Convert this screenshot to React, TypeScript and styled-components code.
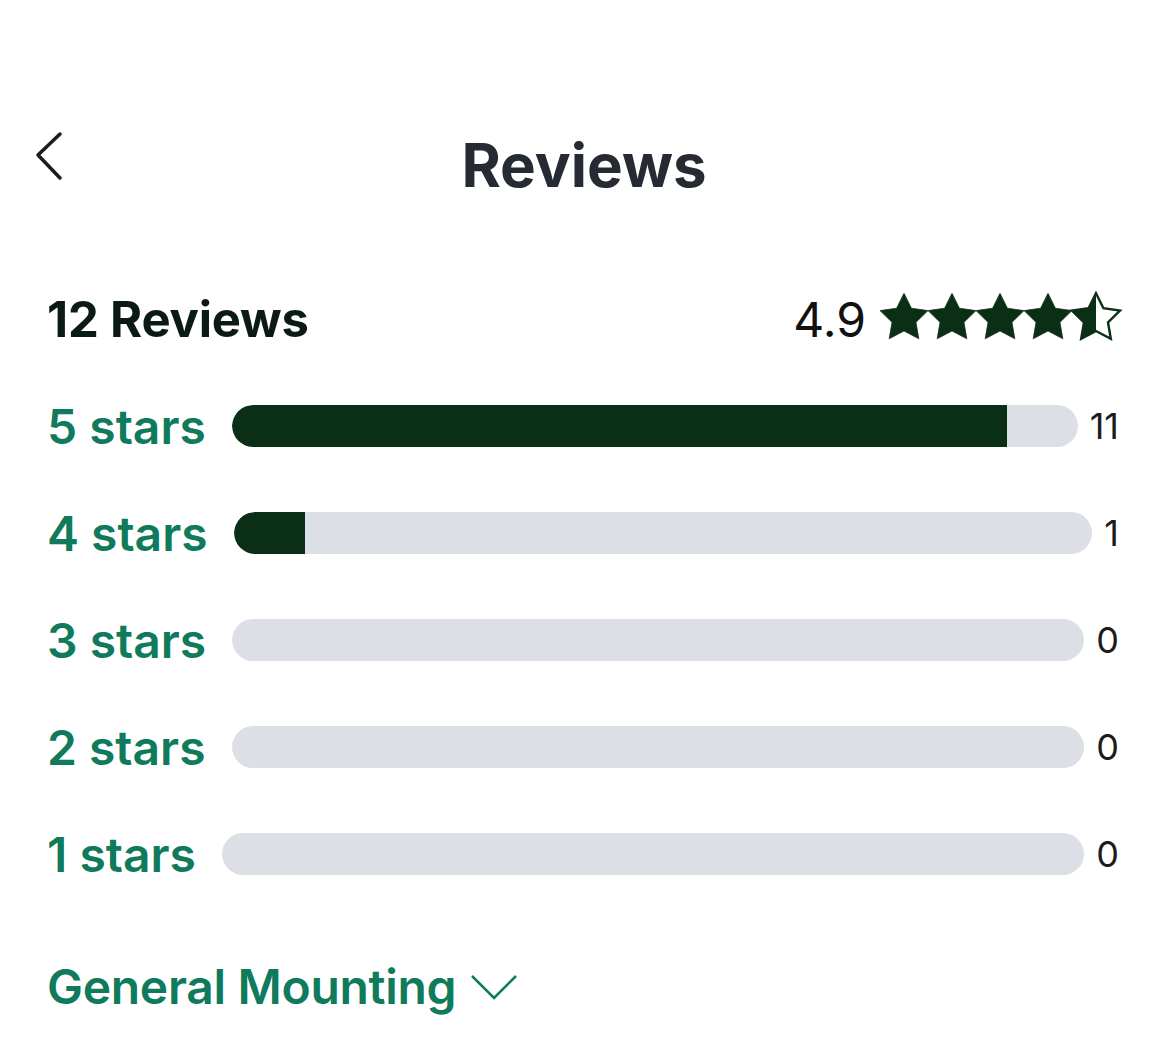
import React from "react";
import styled, { createGlobalStyle } from "styled-components";

const GlobalStyle = createGlobalStyle`
  body {
    margin: 0;
    background: #ffffff;
    font-family: Inter, "Noto Sans", sans-serif;
  }
`;

const Page = styled.div`
  width: 1170px;
  height: 1058px;
  overflow: hidden;
  box-sizing: border-box;
  padding: 0 53px 0 47px;
  display: flex;
  flex-direction: column;
`;

const Header = styled.header`
  position: relative;
  height: 220px;
  display: flex;
  align-items: center;
  justify-content: center;
  padding-top: 110px;
  box-sizing: border-box;
`;

const BackButton = styled.button`
  position: absolute;
  left: -13px;
  top: 130px;
  width: 32px;
  height: 52px;
  padding: 0;
  border: 0;
  background: none;
  display: flex;
  align-items: center;
  justify-content: center;
`;

const Title = styled.h1`
  margin: 0 0 0 4px;
  font-size: 60px;
  font-weight: 700;
  color: #262a33;
  letter-spacing: 0;
  line-height: 1;
`;

const Summary = styled.div`
  display: flex;
  align-items: center;
  justify-content: space-between;
  margin-top: 71px;
  height: 56px;
`;

const TotalCount = styled.h2`
  margin: 0;
  font-size: 49px;
  font-weight: 700;
  color: #0b1a12;
  letter-spacing: -0.2px;
`;

const RatingGroup = styled.div`
  display: flex;
  align-items: center;
  gap: 14px;
  margin-right: -3px;
`;

const RatingValue = styled.span`
  font-size: 48px;
  font-weight: 400;
  color: #111111;
`;

const Stars = styled.div`
  display: flex;
  align-items: center;
  margin-top: -6px;
`;

const StarSvg = styled.svg`
  width: 48px;
  height: 46px;
  overflow: visible;
`;

const Rows = styled.div`
  display: flex;
  flex-direction: column;
  gap: 65px;
  margin-top: 58px;
`;

const Row = styled.div`
  display: flex;
  align-items: center;
  height: 42px;
`;

const RowLabel = styled.span`
  font-size: 48px;
  font-weight: 600;
  color: #0f7a5c;
  white-space: nowrap;
  margin-right: 26px;
`;

const Track = styled.div`
  flex: 1;
  height: 42px;
  border-radius: 21px;
  background: #dcdfe6;
  overflow: hidden;
  display: flex;
`;

const Fill = styled.div`
  height: 100%;
  background: #0b2e17;
  border-radius: 21px 0 0 21px;
`;

const Count = styled.span`
  font-size: 36px;
  font-weight: 400;
  color: #1c1c1c;
  margin-left: 12px;
  margin-right: -2px;
  text-align: right;
`;

const Section = styled.div`
  display: flex;
  align-items: center;
  gap: 14px;
  margin-top: 82px;
`;

const SectionTitle = styled.h3`
  margin: 0;
  font-size: 48px;
  font-weight: 600;
  color: #0f7a5c;
  letter-spacing: -0.3px;
`;

const STAR = "12,2 15.09,8.26 22,9.27 17,14.14 18.18,21.02 12,17.77 5.82,21.02 7,14.14 2,9.27 8.91,8.26";

const Star = ({ fill, id }: { fill: number; id: string }) => (
  <StarSvg viewBox="2 2 20 19.02">
    <defs>
      <linearGradient id={id} x1="0" x2="1" y1="0" y2="0">
        <stop offset={`${fill * 100}%`} stopColor="#0b2e17" />
        <stop offset={`${fill * 100}%`} stopColor="#ffffff" />
      </linearGradient>
    </defs>
    <polygon
      points={STAR}
      fill={`url(#${id})`}
      stroke="#0b2e17"
      strokeWidth={fill < 1 ? 1 : 0.3}
      strokeLinejoin="miter"
    />
  </StarSvg>
);

const rows = [
  { label: "5 stars", count: 11 },
  { label: "4 stars", count: 1 },
  { label: "3 stars", count: 0 },
  { label: "2 stars", count: 0 },
  { label: "1 stars", count: 0 },
];

const total = 12;

export default function App() {
  return (
    <>
      <GlobalStyle />
      <Page>
        <Header>
          <BackButton aria-label="Back">
            <svg width="32" height="52" viewBox="0 0 32 52">
              <polyline
                points="26,4 4,25 26,48"
                fill="none"
                stroke="#1c1c1c"
                strokeWidth="3.5"
                strokeLinecap="round"
                strokeLinejoin="round"
              />
            </svg>
          </BackButton>
          <Title>Reviews</Title>
        </Header>

        <Summary>
          <TotalCount>12 Reviews</TotalCount>
          <RatingGroup>
            <RatingValue>4.9</RatingValue>
            <Stars>
              {[1, 1, 1, 1, 0.5].map((f, i) => (
                <Star key={i} fill={f} id={`star-${i}`} />
              ))}
            </Stars>
          </RatingGroup>
        </Summary>

        <Rows>
          {rows.map((r) => (
            <Row key={r.label}>
              <RowLabel>{r.label}</RowLabel>
              <Track>
                <Fill style={{ width: `${(r.count / total) * 100}%` }} />
              </Track>
              <Count>{r.count}</Count>
            </Row>
          ))}
        </Rows>

        <Section>
          <SectionTitle>General Mounting</SectionTitle>
          <svg width="50" height="28" viewBox="0 0 50 28">
            <polyline
              points="2,3 24,25 46,3"
              fill="none"
              stroke="#0f7a5c"
              strokeWidth="2.5"
            />
          </svg>
        </Section>
      </Page>
    </>
  );
}
